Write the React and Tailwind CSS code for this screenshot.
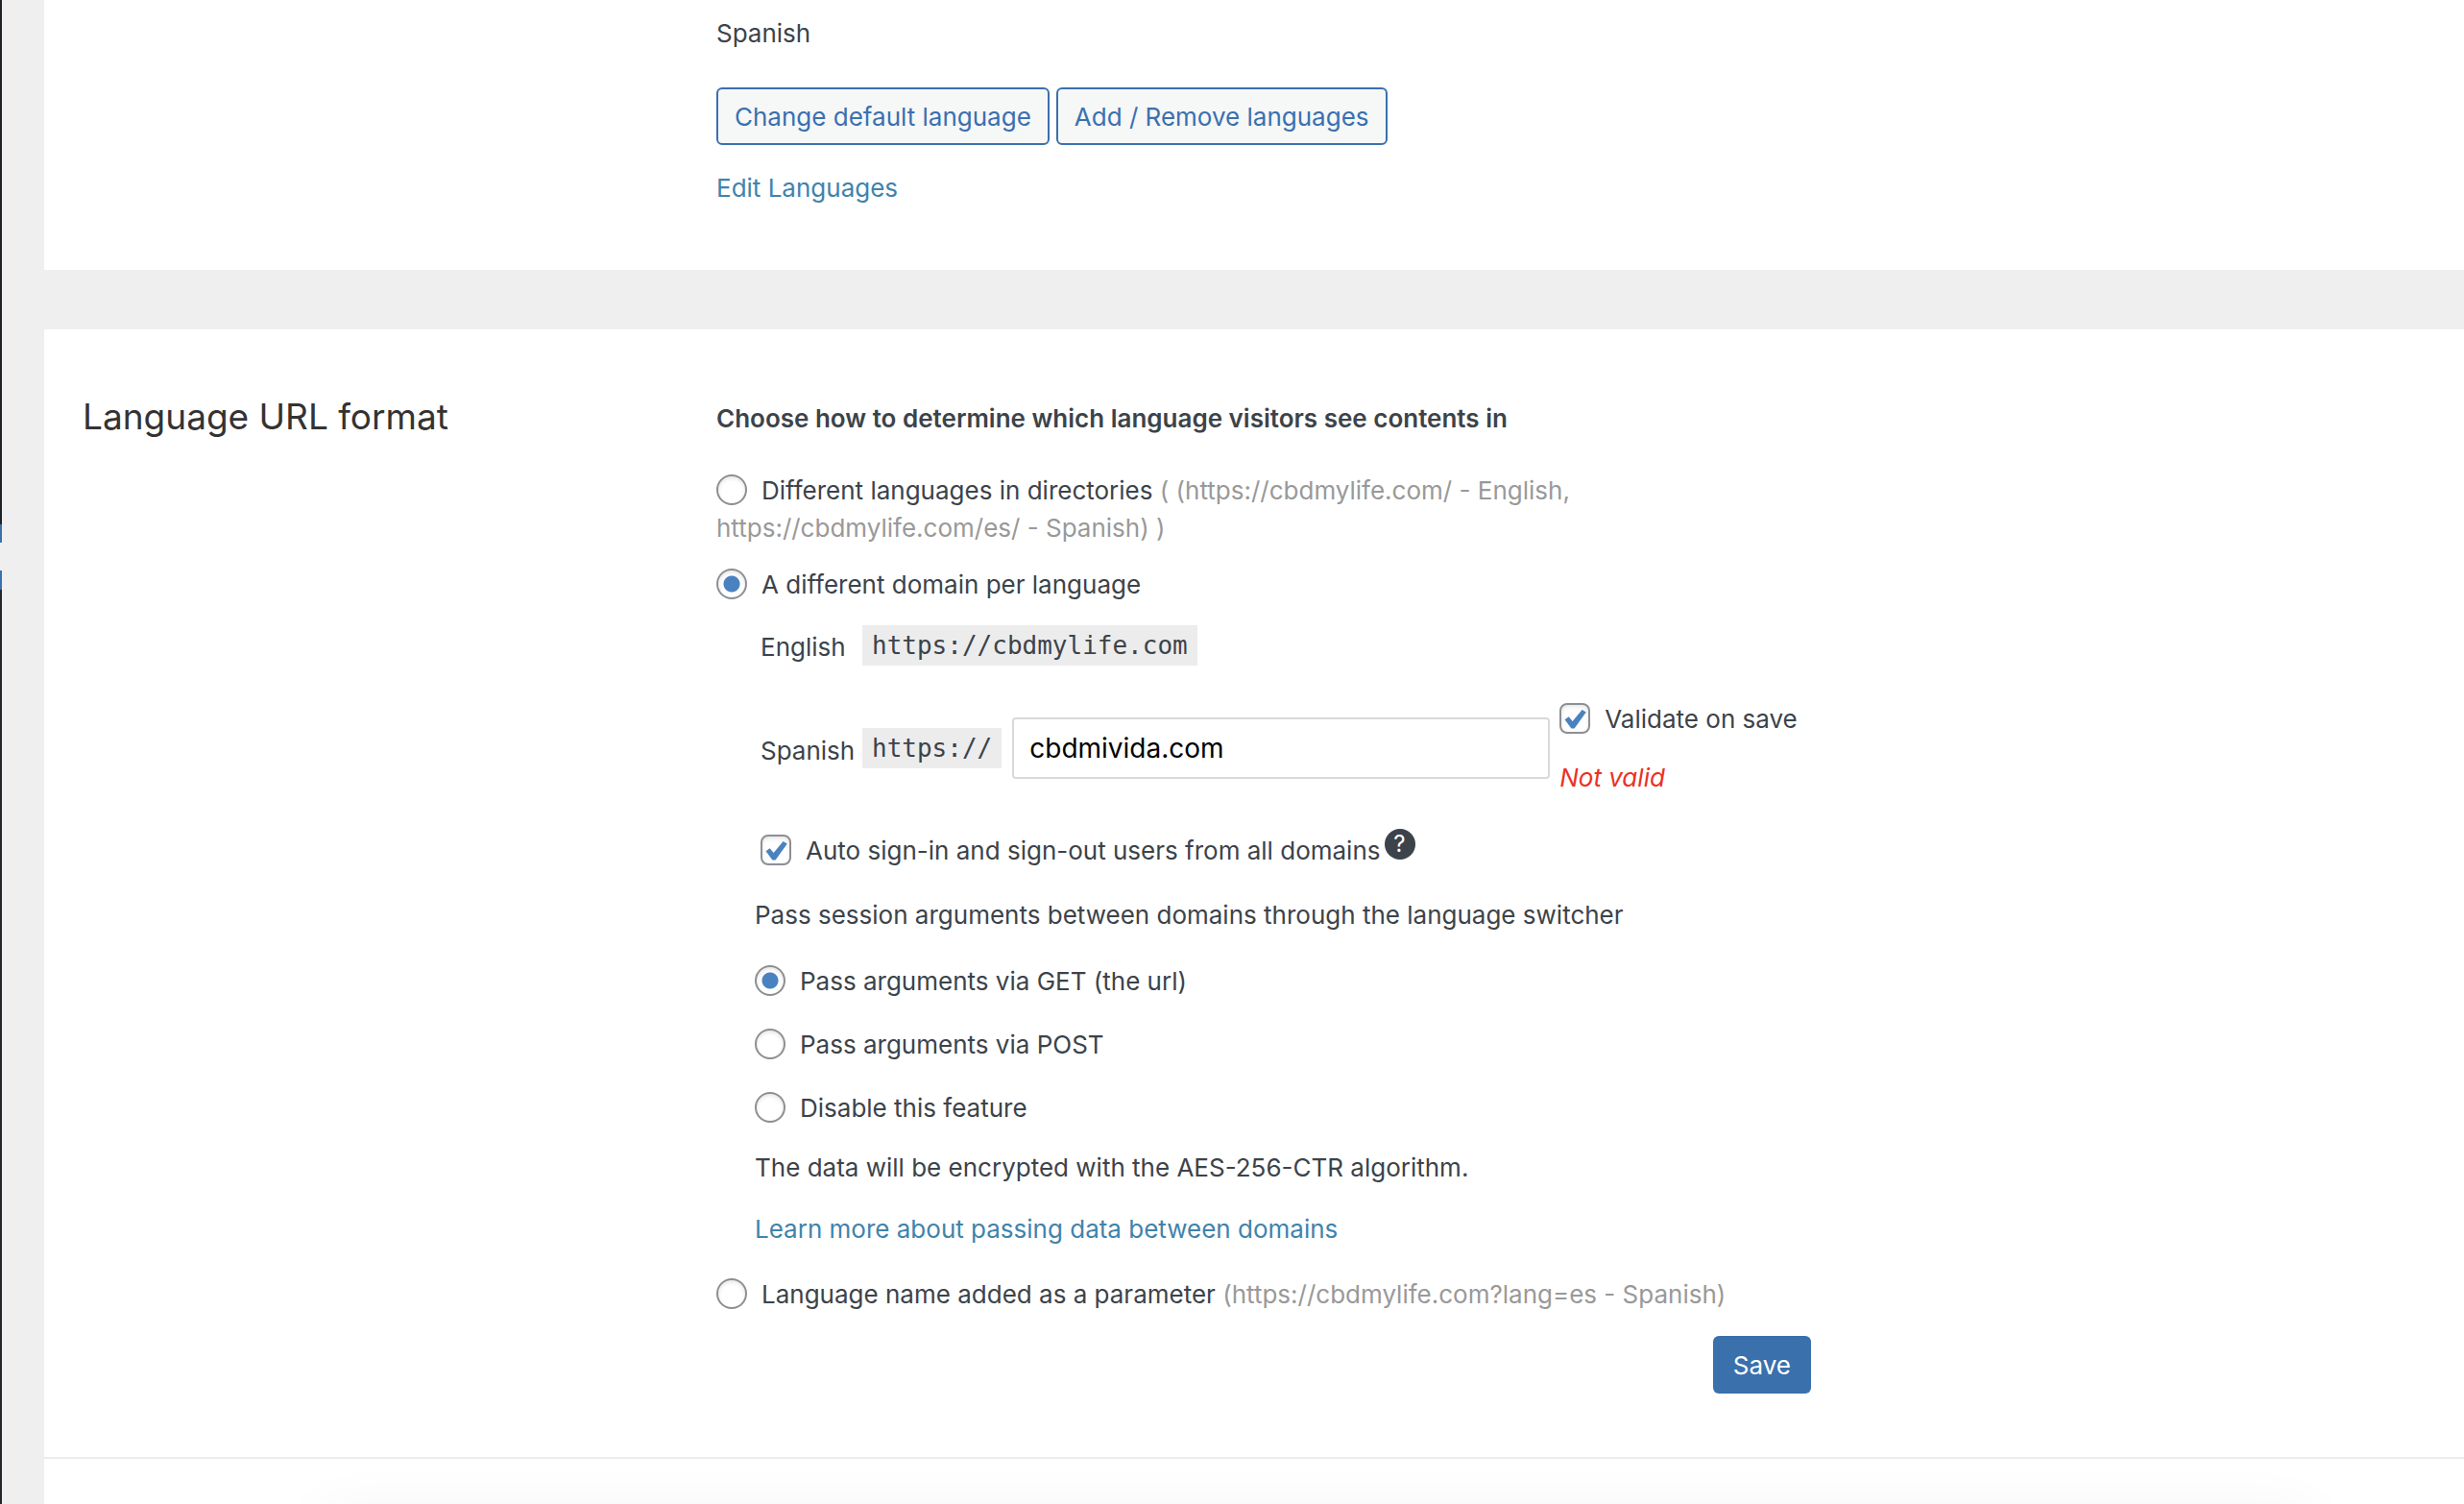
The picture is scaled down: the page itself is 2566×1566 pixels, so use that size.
import { useState } from "react";

function Radio({ id, name, value, selected, onSelect }) {
  return (
    <input
      type="radio"
      id={id}
      name={name}
      checked={selected === value}
      onChange={() => onSelect(value)}
      className="mr-[15px] inline-block size-8 appearance-none rounded-full border-2 border-[#8c8f94] bg-white align-[-6px] shadow-[inset_0_2px_4px_rgba(0,0,0,0.1)] checked:bg-[radial-gradient(circle,#4a82c0_0_8px,transparent_9px)]"
    />
  );
}

function Checkbox({ id, checked, onChange }) {
  return (
    <span className="relative mr-[15px] inline-block size-8 overflow-hidden align-[-6px]">
      <input
        type="checkbox"
        id={id}
        checked={checked}
        onChange={(e) => onChange(e.target.checked)}
        className="peer block size-8 appearance-none rounded-lg border-2 border-[#8c8f94] bg-white shadow-[inset_0_2px_4px_rgba(0,0,0,0.1)]"
      />
      <svg viewBox="0 0 32 32" className="pointer-events-none absolute inset-0 hidden size-8 peer-checked:block">
        <path d="M5.5 17.2 9.7 14.2 13.6 19 23.6 7 27.8 9.6 15.6 26.4H12.4Z" fill="#4a82c0" />
      </svg>
    </span>
  );
}

// sliver of the collapsed admin menu
function MenuEdge() {
  return (
    <div className="flex w-[2px] shrink-0 flex-col bg-[#efefef]">
      <div className="h-[546px] bg-[#1d2327]" />
      <div className="h-[19px] bg-[#3a70b0]" />
      <div className="mt-[29px] h-5 bg-[#3a70b0]" />
      <div className="flex-1 bg-[#23282d]" />
    </div>
  );
}

const code = "bg-[#ececec] px-[10px] font-['DejaVu_Sans_Mono',monospace] text-[26px] leading-[42px]";
const outlineButton =
  "h-[60px] rounded-md border-2 border-[#3a70b0] bg-[#f6f7f7] px-[17px] text-[26px] text-[#3a70b0]";

const passOptions = [
  { value: "get", label: "Pass arguments via GET (the url)" },
  { value: "post", label: "Pass arguments via POST" },
  { value: "off", label: "Disable this feature" },
];

export default function App() {
  const [format, setFormat] = useState("domain");
  const [pass, setPass] = useState("get");
  const [validate, setValidate] = useState(true);
  const [autoSign, setAutoSign] = useState(true);
  const [domain, setDomain] = useState("cbdmivida.com");

  return (
    <div className="flex h-screen overflow-hidden bg-[#efefef] font-[Inter,sans-serif] text-[26px] leading-[39px] text-[#3c434a]">
      <MenuEdge />
      <main className="ml-11 flex flex-1 flex-col">
        <section className="bg-white pt-[15px] pb-[66px] pl-[700px]">
          <p>Spanish</p>
          <div className="mt-[37px] flex gap-[7px]">
            <button className={outlineButton}>Change default language</button>
            <button className={outlineButton}>Add / Remove languages</button>
          </div>
          <a href="#languages" className="mt-[25px] inline-block text-[#4183ab]">Edit Languages</a>
        </section>

        <section className="mt-[62px] flex border-b-2 border-[#ececec] bg-white pt-[73px] pb-[66px] pl-10">
          <h2 className="w-[660px] shrink-0 text-[37px] leading-9 text-[#333]">Language URL format</h2>

          <form className="w-[1140px]" onSubmit={(e) => e.preventDefault()}>
            <h4 className="font-semibold">Choose how to determine which language visitors see contents in</h4>

            <div className="mt-9">
              <Radio id="format-dir" name="format" value="directory" selected={format} onSelect={setFormat} />
              <label htmlFor="format-dir">
                Different languages in directories{" "}
                <span className="text-[#999]">
                  ( (https://cbdmylife.com/ - English,
                  <br />
                  https://cbdmylife.com/es/ - Spanish) )
                </span>
              </label>
            </div>

            <div className="mt-5">
              <Radio id="format-domain" name="format" value="domain" selected={format} onSelect={setFormat} />
              <label htmlFor="format-domain">A different domain per language</label>
            </div>

            <div className="ml-[46px]">
              <div className="mt-[22px] flex items-center">
                <span className="w-[106px] pt-1">English</span>
                <code className={code}>https://cbdmylife.com</code>
              </div>

              <div className="mt-9 flex items-center">
                <label htmlFor="domain-es" className="w-[106px] pt-1">Spanish</label>
                <code className={code}>https://</code>
                <input
                  id="domain-es"
                  type="text"
                  value={domain}
                  onChange={(e) => setDomain(e.target.value)}
                  className="ml-[11px] h-16 w-[560px] rounded-sm border-2 border-[#d9d9d9] bg-white px-4 text-[28px] text-black"
                />
                <div className="ml-[10px]">
                  <div>
                    <Checkbox id="validate" checked={validate} onChange={setValidate} />
                    <label htmlFor="validate">Validate on save</label>
                  </div>
                  <p className="mt-[22px] text-[#eb3223] italic">Not valid</p>
                </div>
              </div>

              <div className="mt-[37px] flex">
                <div>
                  <Checkbox id="auto-sign" checked={autoSign} onChange={setAutoSign} />
                  <label htmlFor="auto-sign">Auto sign-in and sign-out users from all domains</label>
                </div>
                <button
                  type="button"
                  aria-label="Help"
                  className="ml-1 -mt-[3px] grid size-8 place-items-center rounded-full bg-[#3c434a] text-2xl leading-8 text-white"
                >
                  ?
                </button>
              </div>
            </div>

            <div className="ml-10">
              <p className="mt-7">Pass session arguments between domains through the language switcher</p>
              <div className="mt-[30px] space-y-[27px]">
                {passOptions.map((o) => (
                  <div key={o.value}>
                    <Radio id={`pass-${o.value}`} name="pass" value={o.value} selected={pass} onSelect={setPass} />
                    <label htmlFor={`pass-${o.value}`}>{o.label}</label>
                  </div>
                ))}
              </div>
              <p className="mt-[23px]">The data will be encrypted with the AES-256-CTR algorithm.</p>
              <p className="mt-[25px]">
                <a href="#learn-more" className="text-[#4183ab]">Learn more about passing data between domains</a>
              </p>
            </div>

            <div className="mt-[29px]">
              <Radio id="format-param" name="format" value="parameter" selected={format} onSelect={setFormat} />
              <label htmlFor="format-param">
                Language name added as a parameter{" "}
                <span className="text-[#999]">(https://cbdmylife.com?lang=es - Spanish)</span>
              </label>
            </div>

            <div className="mt-6 flex justify-end">
              <button className="h-[60px] rounded-md bg-[#3a70ac] px-[21px] text-[26px] text-white">Save</button>
            </div>
          </form>
        </section>

        <section className="flex-1 overflow-hidden bg-white pt-14">
          <div className="mr-40 ml-72 h-40 shadow-[0_0_60px_rgba(0,0,0,0.05)]" />
        </section>
      </main>
    </div>
  );
}
